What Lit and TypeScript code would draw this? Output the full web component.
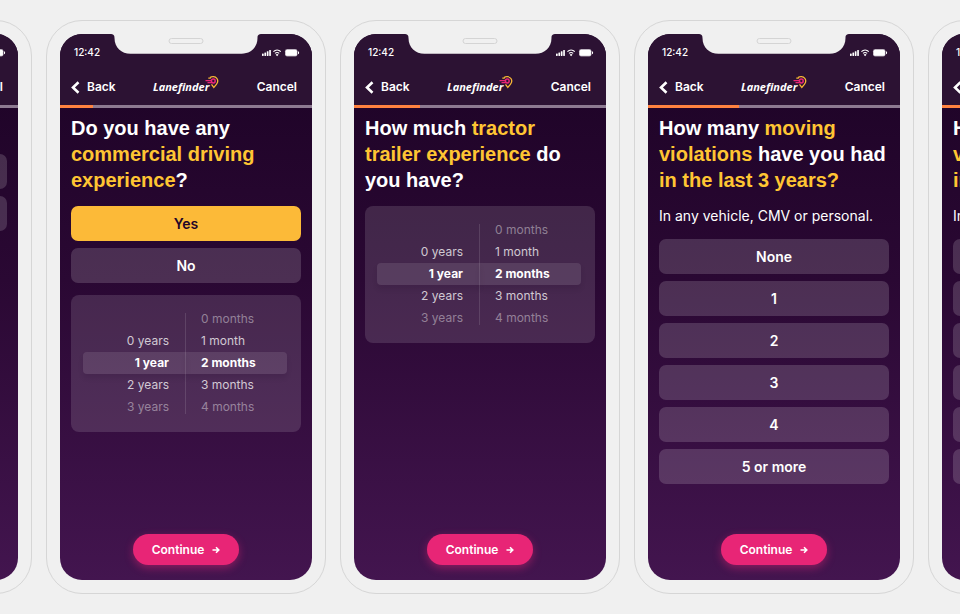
import { LitElement, html, css, svg, nothing } from "lit";
import { customElement, property } from "lit/decorators.js";

type Run = { text: string; accent?: boolean };

interface Step {
  name: string;
  progress: number;
  heading: Run[][];
  hint?: string;
  options?: string[];
  chosen?: string;
  picker?: boolean;
}

const violations: Run[][] = [
  [{ text: "How many " }, { text: "moving", accent: true }],
  [{ text: "violations", accent: true }, { text: " have you had" }],
  [{ text: "in the last 3 years?", accent: true }],
];

const counts = ["None", "1", "2", "3", "4", "5 or more"];

const steps: Step[] = [
  {
    name: "licence",
    progress: 6,
    heading: [[{ text: "Do you have any" }]],
    options: ["Yes", "No"],
  },
  {
    name: "driving",
    progress: 13,
    heading: [
      [{ text: "Do you have any" }],
      [{ text: "commercial driving", accent: true }],
      [{ text: "experience", accent: true }, { text: "?" }],
    ],
    options: ["Yes", "No"],
    chosen: "Yes",
    picker: true,
  },
  {
    name: "trailer",
    progress: 26,
    heading: [
      [{ text: "How much " }, { text: "tractor", accent: true }],
      [{ text: "trailer experience", accent: true }, { text: " do" }],
      [{ text: "you have?" }],
    ],
    picker: true,
  },
  {
    name: "violations",
    progress: 36,
    heading: violations,
    hint: "In any vehicle, CMV or personal.",
    options: counts,
  },
  {
    name: "violations-more",
    progress: 48,
    heading: violations,
    hint: "In any vehicle, CMV or personal.",
    options: counts,
  },
];

const chevron = svg`<path d="M7.500 1.200 2 6.500l5.500 5.300" fill="none" stroke="#fff" stroke-width="2.600"/>`;

@customElement("duration-picker")
export class DurationPicker extends LitElement {
  static styles = css`
    :host {
      display: block;
      font-size: 12px;
      line-height: 22px;
      color: #fff;
    }
    .panel {
      display: grid;
      grid-template-columns: 103px 1fr;
      padding: 13px 14px 14px 12px;
      border-radius: 8px;
      background: rgba(255, 255, 255, 0.13);
    }
    ul {
      list-style: none;
      margin: 0;
      padding: 0;
    }
    .years {
      text-align: right;
      background: linear-gradient(rgba(255, 255, 255, 0.12), rgba(255, 255, 255, 0.12)) right center /
        1px 101px no-repeat;
    }
    li {
      height: 22px;
      color: rgba(255, 255, 255, 0.75);
    }
    li.far {
      color: rgba(255, 255, 255, 0.42);
    }
    li.on {
      color: #fff;
      font-weight: 700;
      background: rgba(255, 255, 255, 0.1);
      box-shadow: 0 4px 5px rgba(30, 0, 40, 0.12);
    }
    .years li {
      padding-right: 17px;
    }
    .months li {
      padding-left: 15px;
    }
    .years .on {
      border-radius: 4px 0 0 4px;
    }
    .months .on {
      border-radius: 0 4px 4px 0;
    }
  `;

  private column(label: string, cls: string, items: string[]) {
    return html`<ul class=${cls} role="listbox" aria-label=${label}>
      ${items.map(
        (t, i) => html`<li
          class=${i === 2 ? "on" : i === 0 || i === 4 ? "far" : ""}
          role=${t ? "option" : "presentation"}
          aria-selected=${t ? String(i === 2) : nothing}
        >${t}</li>`
      )}
    </ul>`;
  }

  render() {
    return html`<div class="panel">
      ${this.column("Years", "years", ["", "0 years", "1 year", "2 years", "3 years"])}
      ${this.column("Months", "months", ["0 months", "1 month", "2 months", "3 months", "4 months"])}
    </div>`;
  }
}

@customElement("phone-frame")
export class PhoneFrame extends LitElement {
  @property({ attribute: false }) step!: Step;

  static styles = css`
    :host {
      display: block;
      flex: none;
      width: 280px;
      box-sizing: border-box;
      padding: 13px;
      border: 1px solid #d6d6d6;
      border-radius: 36px;
      font-family: Inter, "Open Sans", sans-serif;
      color: #fff;
    }
    .screen {
      position: relative;
      display: flex;
      flex-direction: column;
      min-height: 546px;
      border-radius: 22px;
      overflow: hidden;
      background: linear-gradient(#200429 70px, #2a0833 45%, #43154f);
    }
    .notch {
      position: absolute;
      top: 0;
      left: 0;
      right: 0;
      margin: 0 auto;
      display: block;
    }
    header {
      background: #2c1233;
    }
    .status {
      display: flex;
      align-items: center;
      justify-content: space-between;
      height: 36px;
      padding: 0 12px 0 14px;
      font-size: 10px;
      font-weight: 500;
    }
    nav {
      display: flex;
      align-items: center;
      justify-content: space-between;
      height: 34px;
      padding: 0 15px 1px 11px;
    }
    nav button {
      display: flex;
      align-items: center;
      gap: 6px;
      padding: 0;
      border: 0;
      background: none;
      color: inherit;
      font: 600 12px/16px Inter, sans-serif;
    }
    .logo {
      display: flex;
      align-items: flex-start;
      height: 22px;
    }
    .word {
      font: italic 700 11px/16px "Open Sans", sans-serif;
      padding-top: 3px;
    }
    .logo svg {
      margin-left: -4px;
    }
    .track {
      height: 3px;
      background: #8d7a91;
    }
    .fill {
      height: 100%;
      background: #ff8240;
    }
    main {
      flex: 1;
      display: flex;
      flex-direction: column;
      padding: 7px 11px 15px;
    }
    h2 {
      margin: 0 0 13px;
      font: 700 20px/26px "Liberation Sans", Arial, sans-serif;
      white-space: nowrap;
    }
    h2 span {
      display: block;
    }
    em {
      font-style: normal;
      color: #ffc533;
    }
    .hint {
      margin: 0 0 13px;
      font-size: 14px;
      line-height: 20px;
      white-space: nowrap;
    }
    .options {
      display: grid;
      gap: 7px;
      margin-bottom: 12px;
    }
    .option {
      height: 35px;
      padding: 0;
      border: 0;
      border-radius: 7px;
      background: rgba(255, 255, 255, 0.16);
      color: #fff;
      font: 600 14px/20px Inter, sans-serif;
    }
    .option.chosen {
      background: #fcba38;
      color: #210429;
    }
    .continue {
      display: flex;
      align-items: center;
      align-self: center;
      gap: 8px;
      height: 31px;
      margin-top: auto;
      padding: 0 19px;
      border: 0;
      border-radius: 16px;
      background: #e82576;
      box-shadow: 0 3px 9px rgba(232, 37, 118, 0.45);
      color: #fff;
      font: 600 12px/16px Inter, sans-serif;
    }
  `;

  private logo() {
    return html`<div class="logo">
      <span class="word">Lanefinder</span>
      <svg width="14" height="13" viewBox="0 0 14 13" aria-hidden="true" fill="none">
        <path d="M5 1.6C7 .2 10.2.4 11.8 2.4c1.500 2 1 4.200-.4 5.900L8.800 11.500 6.500 8.400" stroke="#f5b335" stroke-width="1.300" />
        <path d="M3.300 2.200h2.500" stroke="#f5b335" stroke-width="1.200" />
        <path d="M.5 4.600H6M2.500 6.600H7" stroke="#e82576" stroke-width="1.200" />
        <circle cx="8.300" cy="5" r="1.900" stroke="#e82576" stroke-width="1.500" />
      </svg>
    </div>`;
  }

  render() {
    const s = this.step;
    return html`<div class="screen">
      <header>
        <div class="status">
          <span>12:42</span>
          <svg width="39" height="9" viewBox="0 0 39 9" fill="#fff" aria-hidden="true">
            <rect x="1" y="5.500" width="1.700" height="2.500" rx=".4" />
            <rect x="3.400" y="4.500" width="1.700" height="3.500" rx=".4" />
            <rect x="5.800" y="3.200" width="1.700" height="4.800" rx=".4" />
            <rect x="8.200" y="2" width="1.700" height="6" rx=".4" />
            <path d="M12.400 3.600a5.500 5.500 0 0 1 7.400 0M14 5.400a3.200 3.200 0 0 1 4.200 0" fill="none" stroke="#fff" stroke-width="1.100" />
            <path d="m16.100 8.200-1.400-1.500a2 2 0 0 1 2.800 0z" />
            <rect x="24" y="1" width="12.500" height="7.500" rx="2.200" fill="#a99dac" />
            <rect x="24.600" y="1.700" width="11.300" height="6.100" rx="1.600" />
            <path d="M37 3.200c1.500.4 1.500 2.700 0 3.100z" />
          </svg>
        </div>
        <nav>
          <button>
            <svg width="10" height="13" viewBox="0 0 10 13" aria-hidden="true">${chevron}</svg>
            Back
          </button>
          ${this.logo()}
          <button>Cancel</button>
        </nav>
      </header>
      <div class="track" role="progressbar" aria-label="Progress" aria-valuenow=${s.progress}>
        <div class="fill" style="width:${s.progress}%"></div>
      </div>
      <main>
        <h2>
          ${s.heading.map(
            (line) => html`<span>${line.map((r) => (r.accent ? html`<em>${r.text}</em>` : r.text))}</span>`
          )}
        </h2>
        ${s.hint ? html`<p class="hint">${s.hint}</p>` : nothing}
        ${s.options
          ? html`<div class="options">
              ${s.options.map(
                (o) => html`<button class="option ${o === s.chosen ? "chosen" : ""}">${o}</button>`
              )}
            </div>`
          : nothing}
        ${s.picker ? html`<duration-picker></duration-picker>` : nothing}
        <button class="continue">
          Continue
          <svg width="8" height="8" viewBox="0 0 8 8" aria-hidden="true">
            <path d="M.5 4h6M4 1.200 6.800 4 4 6.800" fill="none" stroke="#fff" stroke-width="1.600" />
          </svg>
        </button>
      </main>
      <svg class="notch" width="152" height="20" viewBox="0 0 152 20" aria-hidden="true">
        <path d="M0 0h152c-3.500 0-4.500 1-4.500 4 0 9.500-7 15.800-16 15.800H20.500c-9 0-16-6.300-16-15.800C4.500 1 3.500 0 0 0z" fill="#f0f0f0" />
        <rect x="59" y="4.500" width="34" height="5" rx="2.500" fill="#f0f0f0" stroke="#d4d4d4" />
      </svg>
    </div>`;
  }
}

@customElement("app-root")
export class AppRoot extends LitElement {
  static styles = css`
    :host {
      display: flex;
      justify-content: center;
      gap: 14px;
      min-height: 100vh;
      box-sizing: border-box;
      padding: 20px 0;
      overflow: hidden;
      align-items: flex-start;
      background: #f0f0f0;
    }
  `;

  render() {
    return steps.map((s) => html`<phone-frame .step=${s}></phone-frame>`);
  }
}
